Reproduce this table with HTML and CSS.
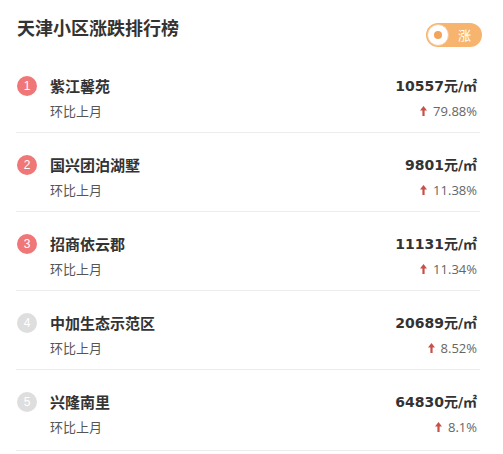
FILE: index.html
```html
<!DOCTYPE html>
<html lang="zh">
<head>
<meta charset="utf-8">
<link rel="stylesheet" href="styles.css">
</head>
<body>
<div class="page">
  <div class="header">
    <h1 class="title">天津小区涨跌排行榜</h1>
    <div class="toggle"><span class="knob"><span class="dot"></span></span><span class="toggle-text">涨</span></div>
  </div>
  <ul class="list">
    <li class="row">
      <div class="left">
        <div class="name-line"><span class="badge hot">1</span><span class="name">紫江馨苑</span></div>
        <div class="sub">环比上月</div>
      </div>
      <div class="right">
        <div class="price">10557元/㎡</div>
        <div class="change"><svg class="arrow" viewBox="0 0 7 10" width="7" height="10"><path d="M3.5 0 L7 4.5 H4.6 V10 H2.4 V4.5 H0 Z"/></svg>79.88%</div>
      </div>
    </li>
    <li class="row">
      <div class="left">
        <div class="name-line"><span class="badge hot">2</span><span class="name">国兴团泊湖墅</span></div>
        <div class="sub">环比上月</div>
      </div>
      <div class="right">
        <div class="price">9801元/㎡</div>
        <div class="change"><svg class="arrow" viewBox="0 0 7 10" width="7" height="10"><path d="M3.5 0 L7 4.5 H4.6 V10 H2.4 V4.5 H0 Z"/></svg>11.38%</div>
      </div>
    </li>
    <li class="row">
      <div class="left">
        <div class="name-line"><span class="badge hot">3</span><span class="name">招商依云郡</span></div>
        <div class="sub">环比上月</div>
      </div>
      <div class="right">
        <div class="price">11131元/㎡</div>
        <div class="change"><svg class="arrow" viewBox="0 0 7 10" width="7" height="10"><path d="M3.5 0 L7 4.5 H4.6 V10 H2.4 V4.5 H0 Z"/></svg>11.34%</div>
      </div>
    </li>
    <li class="row">
      <div class="left">
        <div class="name-line"><span class="badge">4</span><span class="name">中加生态示范区</span></div>
        <div class="sub">环比上月</div>
      </div>
      <div class="right">
        <div class="price">20689元/㎡</div>
        <div class="change"><svg class="arrow" viewBox="0 0 7 10" width="7" height="10"><path d="M3.5 0 L7 4.5 H4.6 V10 H2.4 V4.5 H0 Z"/></svg>8.52%</div>
      </div>
    </li>
    <li class="row">
      <div class="left">
        <div class="name-line"><span class="badge">5</span><span class="name">兴隆南里</span></div>
        <div class="sub">环比上月</div>
      </div>
      <div class="right">
        <div class="price">64830元/㎡</div>
        <div class="change"><svg class="arrow" viewBox="0 0 7 10" width="7" height="10"><path d="M3.5 0 L7 4.5 H4.6 V10 H2.4 V4.5 H0 Z"/></svg>8.1%</div>
      </div>
    </li>
  </ul>
</div>
</body>
</html>
```

FILE: styles.css
```css
* { box-sizing: border-box; }
html, body {
  margin: 0;
  padding: 0;
  background: #ffffff;
}
body {
  font-family: "Noto Sans CJK SC", "Noto Sans", sans-serif;
  color: #333;
}
.page {
  width: 503px;
  height: 454px;
  overflow: hidden;
}
.header {
  display: flex;
  justify-content: space-between;
  align-items: flex-start;
  height: 54px;
  padding: 0 21px 0 17px;
}
.title {
  margin: 0;
  font-size: 18px;
  line-height: 54px;
  font-weight: bold;
  color: #333;
}
.toggle {
  margin-top: 23px;
  width: 56px;
  height: 24px;
  border-radius: 12px;
  background: #f7b46f;
  display: flex;
  align-items: center;
  padding-left: 1px;
}
.knob {
  width: 22px;
  height: 22px;
  border-radius: 50%;
  background: #fff;
  border: 1px solid #f6c79a;
  display: flex;
  align-items: center;
  justify-content: center;
}
.dot {
  width: 8px;
  height: 8px;
  border-radius: 50%;
  background: #f2a35c;
}
.toggle-text {
  margin-left: 9px;
  color: #fff;
  font-size: 13px;
  line-height: 24px;
}
.list {
  list-style: none;
  margin: 0 23px 0 16px;
  padding: 0;
}
.row {
  display: flex;
  justify-content: space-between;
  height: 79px;
  padding: 22px 3px 0 1px;
  border-bottom: 1px solid #ececec;
}
.row:last-child {
  height: 81px;
}
.name-line {
  display: flex;
  align-items: center;
  height: 20px;
}
.badge {
  width: 20px;
  height: 20px;
  border-radius: 50%;
  background: #dedede;
  color: #fff;
  font-family: "Liberation Sans", sans-serif;
  font-size: 12px;
  line-height: 20px;
  text-align: center;
  margin-right: 13px;
}
.badge.hot {
  background: #f07777;
}
.name {
  font-size: 15px;
  font-weight: bold;
  color: #333;
  line-height: 20px;
}
.sub {
  margin-top: 5px;
  margin-left: 33px;
  font-size: 13px;
  line-height: 20px;
  color: #555;
}
.right {
  display: flex;
  flex-direction: column;
  align-items: flex-end;
}
.price {
  font-family: "DejaVu Sans", "Noto Sans CJK SC", sans-serif;
  font-size: 14px;
  font-weight: bold;
  line-height: 20px;
  color: #333;
}
.change {
  margin-top: 5px;
  display: flex;
  align-items: center;
  font-family: "Open Sans", "Noto Sans", sans-serif;
  font-size: 13px;
  line-height: 20px;
  color: #666;
}
.arrow {
  fill: #c8504a;
  margin-right: 6px;
}
```
